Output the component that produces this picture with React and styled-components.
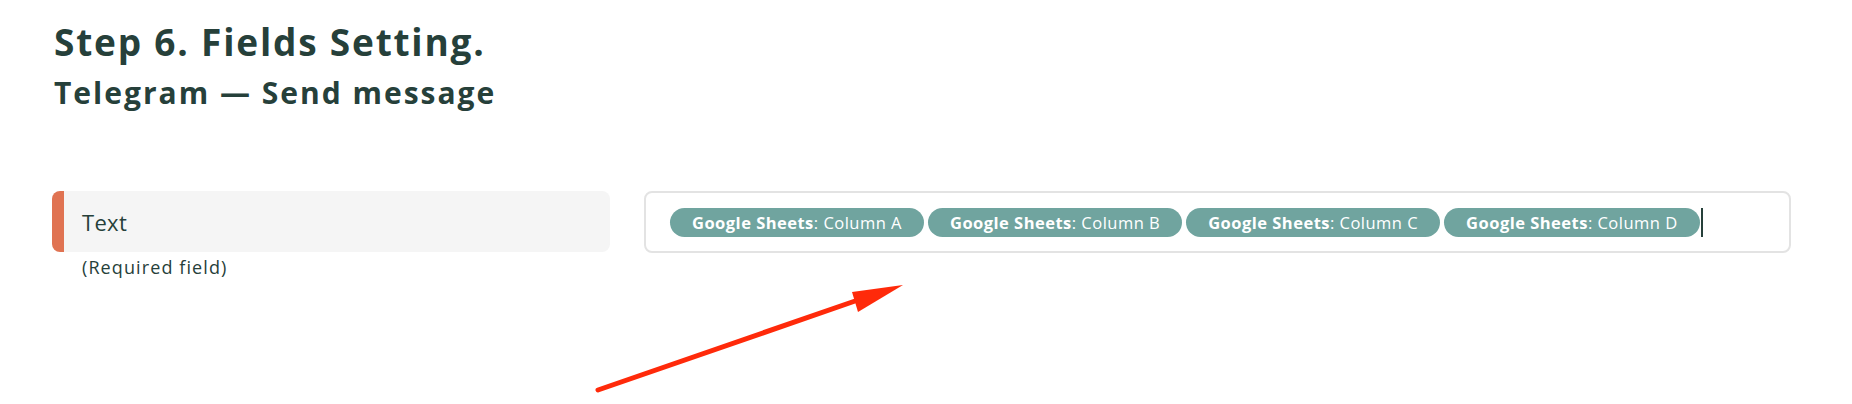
import React from "react";
import styled, { createGlobalStyle } from "styled-components";

const GlobalStyle = createGlobalStyle`
  body {
    margin: 0;
    background: #ffffff;
    font-family: "Open Sans", "Liberation Sans", sans-serif;
    color: #26403a;
  }
`;

const Page = styled.div`
  position: relative;
  width: 1852px;
  height: 404px;
  box-sizing: border-box;
  padding: 20px 61px 0 52px;
  overflow: hidden;
`;

const Title = styled.h1`
  margin: 0 0 0 2px;
  font-size: 37px;
  line-height: 1.2;
  font-weight: 700;
  letter-spacing: 1.8px;
  color: #26403a;
`;

const Subtitle = styled.h2`
  margin: 11px 0 0 2px;
  font-size: 30px;
  line-height: 1.2;
  font-weight: 700;
  letter-spacing: 2px;
  color: #26403a;
`;

const FieldRow = styled.div`
  display: flex;
  align-items: flex-start;
  gap: 34px;
  margin-top: 80px;
`;

const LabelCol = styled.div`
  width: 558px;
  flex-shrink: 0;
`;

const LabelBox = styled.div`
  height: 61px;
  box-sizing: border-box;
  display: flex;
  align-items: center;
  padding-left: 18px;
  background: #f5f5f5;
  border-left: 12px solid #e07352;
  border-radius: 8px;
  font-size: 22px;
  line-height: 1.2;
  letter-spacing: 0.3px;
  color: #26403a;
`;

const Hint = styled.div`
  margin-top: 5px;
  padding-left: 30px;
  font-size: 18px;
  line-height: 1.2;
  letter-spacing: 1.1px;
  color: #26403a;
`;

const InputBox = styled.div`
  flex: 1;
  height: 62px;
  box-sizing: border-box;
  display: flex;
  align-items: center;
  gap: 4px;
  padding: 0 24px;
  border: 2px solid #e3e3e3;
  border-radius: 8px;
  background: #ffffff;
`;

const Chip = styled.span`
  display: inline-flex;
  align-items: center;
  height: 29px;
  padding: 0 22px;
  border-radius: 15px;
  background: #70a49f;
  color: #ffffff;
  font-size: 16.5px;
  letter-spacing: 0.48px;
  white-space: nowrap;

  b {
    font-weight: 700;
  }
`;

const Caret = styled.span`
  width: 2px;
  height: 29px;
  margin-left: -3px;
  background: #26403a;
`;

const Arrow = styled.svg`
  position: absolute;
  left: 0;
  top: 0;
  pointer-events: none;
`;

const columns = ["A", "B", "C", "D"];

const App = () => {
  return (
    <Page>
      <GlobalStyle />
      <Title>Step 6. Fields Setting.</Title>
      <Subtitle>Telegram — Send message</Subtitle>

      <FieldRow>
        <LabelCol>
          <LabelBox>Text</LabelBox>
          <Hint>(Required field)</Hint>
        </LabelCol>
        <InputBox>
          {columns.map((c) => (
            <Chip key={c}>
              <b>Google Sheets</b>: Column {c}
            </Chip>
          ))}
          <Caret />
        </InputBox>
      </FieldRow>

      <Arrow width="1852" height="404" viewBox="0 0 1852 404">
        <line
          x1="598"
          y1="390"
          x2="858"
          y2="300"
          stroke="#ff2a0a"
          strokeWidth="5"
          strokeLinecap="round"
        />
        <polygon points="903,285 852,292 858,312" fill="#ff2a0a" />
      </Arrow>
    </Page>
  );
};

export default App;
